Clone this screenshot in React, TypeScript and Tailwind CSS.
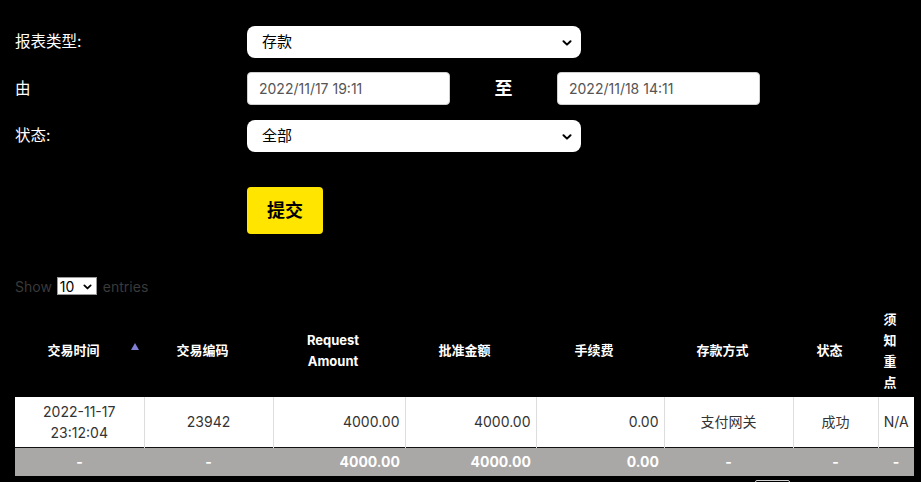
import React from "react";

const FONT = "font-['Inter','Noto_Sans_CJK_SC',sans-serif]";

function Chevron({ className = "" }: { className?: string }) {
  return (
    <svg viewBox="0 0 10 6" className={className} fill="none" stroke="currentColor" strokeWidth="2" strokeLinecap="round" strokeLinejoin="round">
      <path d="M1.5 1.2 L5 4.6 L8.5 1.2" />
    </svg>
  );
}

function SelectBox({ value }: { value: string }) {
  return (
    <div className="relative w-[334px] h-[32px] bg-white rounded-[8px] flex items-center pl-[15px] text-[15px] text-black">
      <span>{value}</span>
      <Chevron className="absolute right-[9px] top-[14px] w-[10px] h-[6px] text-black" />
    </div>
  );
}

function DateBox({ value }: { value: string }) {
  return (
    <div className="w-[203px] h-[33px] bg-white rounded-[4px] border border-[#cfcfcf] flex items-center pl-[11px] text-[14px] text-[#555]">
      {value}
    </div>
  );
}

const widths = [129, 129, 132, 131, 128, 129, 85, 36];

export default function App() {
  return (
    <div className={`w-[921px] h-[482px] overflow-hidden bg-black ${FONT}`}>
      {/* report filter form */}
      <div className="pt-[26px] pl-[15px] flex flex-col">
        <div className="flex items-center h-[32px]">
          <div className="w-[232px] text-white text-[15.5px]">报表类型:</div>
          <SelectBox value="存款" />
        </div>
        <div className="flex items-center h-[33px] mt-[14px]">
          <div className="w-[232px] text-white text-[15.5px]">由</div>
          <DateBox value="2022/11/17 19:11" />
          <div className="w-[107px] text-center text-white text-[18px] font-bold">至</div>
          <DateBox value="2022/11/18 14:11" />
        </div>
        <div className="flex items-center h-[32px] mt-[15px]">
          <div className="w-[232px] text-white text-[15.5px]">状态:</div>
          <SelectBox value="全部" />
        </div>
        <div className="flex mt-[35px]">
          <div className="w-[232px]" />
          <button className="w-[76px] h-[47px] bg-[#ffe500] rounded-[4px] text-black text-[18px] font-bold">提交</button>
        </div>
      </div>

      {/* entries selector */}
      <div className="mt-[43px] pl-[15px] flex items-center h-[18px] text-[14px] text-[#3a3a3a]">
        <span>Show</span>
        <div className="relative ml-[5px] w-[40px] h-[18px] bg-white border border-[#999] flex items-center pl-[2px] text-[14px] text-black">
          10
          <Chevron className="absolute right-[4px] top-[6px] w-[9px] h-[6px]" />
        </div>
        <span className="ml-[6px]">entries</span>
      </div>

      {/* transactions table */}
      <table className="mt-[10px] ml-[15px] w-[899px] table-fixed border-collapse text-[14px]">
        <colgroup>
          {widths.map((w, i) => (
            <col key={i} style={{ width: w }} />
          ))}
        </colgroup>
        <thead>
          <tr className="h-[92px] text-white font-bold text-[13px]">
            <th className="relative align-middle text-center pr-[12px]">
              交易时间
              <span className="absolute left-[116px] top-[38px] w-0 h-0 border-l-[4px] border-r-[4px] border-b-[7px] border-l-transparent border-r-transparent border-b-[#7f7fd5]" />
            </th>
            <th className="align-middle text-center pr-[12px]">交易编码</th>
            <th className="align-middle text-center pr-[12px] leading-[21px]">Request<br />Amount</th>
            <th className="align-middle text-center pr-[12px]">批准金额</th>
            <th className="align-middle text-center pr-[12px]">手续费</th>
            <th className="align-middle text-center pr-[12px]">存款方式</th>
            <th className="align-middle text-center pr-[12px]">状态</th>
            <th className="align-middle text-center pr-[12px] leading-[21px]">须<br />知<br />重<br />点</th>
          </tr>
        </thead>
        <tbody>
          <tr className="h-[50px] bg-white text-[#333] border-b border-[#111]">
            <td className="text-center leading-[21px] border-r border-[#ddd]">2022-11-17<br />23:12:04</td>
            <td className="text-center border-r border-[#ddd]">23942</td>
            <td className="text-right pr-[5px] border-r border-[#ddd]">4000.00</td>
            <td className="text-right pr-[5px] border-r border-[#ddd]">4000.00</td>
            <td className="text-right pr-[5px] border-r border-[#ddd]">0.00</td>
            <td className="text-center border-r border-[#ddd]">支付网关</td>
            <td className="text-center border-r border-[#ddd]">成功</td>
            <td className="text-center">N/A</td>
          </tr>
        </tbody>
        <tfoot>
          <tr className="h-[29px] bg-[#aaa7a7] text-white font-bold">
            <td className="text-center">-</td>
            <td className="text-center">-</td>
            <td className="text-right pr-[5px]">4000.00</td>
            <td className="text-right pr-[5px]">4000.00</td>
            <td className="text-right pr-[5px]">0.00</td>
            <td className="text-center">-</td>
            <td className="text-center">-</td>
            <td className="text-center">-</td>
          </tr>
        </tfoot>
      </table>

      {/* pagination */}
      <div className="mt-[4px] ml-[755px] w-[35px] h-[24px] border border-[#d0d0d0] rounded-[2px]" />
    </div>
  );
}
